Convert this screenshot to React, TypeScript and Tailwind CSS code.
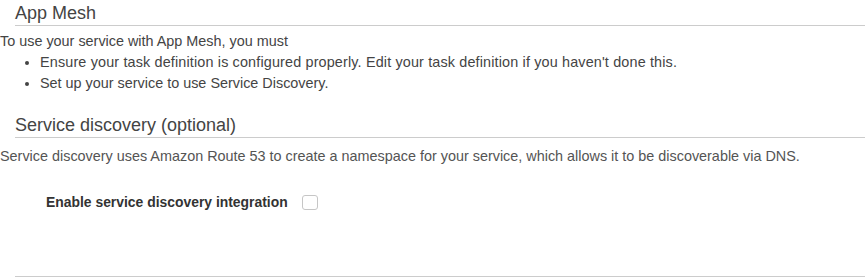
import React from "react";

export default function App() {
  return (
    <div className="w-[865px] h-[279px] bg-white overflow-hidden text-[#444] font-['Liberation_Sans',Arial,sans-serif]">
      <div className="ml-[15px] h-[26px] border-b border-[#cccccc] text-[18px] leading-[22px] pt-[2px] text-[#444]">
        App Mesh
      </div>
      <div className="mt-[5px] text-[14.4px] leading-[21px]">
        <div>To use your service with App Mesh, you must</div>
        <ul className="list-disc pl-[40px]">
          <li className="tracking-[0.15px]">Ensure your task definition is configured properly. Edit your task definition if you haven't done this.</li>
          <li>Set up your service to use Service Discovery.</li>
        </ul>
      </div>
      <div className="ml-[15px] mt-[18px] h-[26px] border-b border-[#cccccc] text-[18px] leading-[22px] pt-[2px] text-[#444]">
        Service discovery (optional)
      </div>
      <div className="mt-[8px] text-[14.4px] leading-[21px] text-[#545454]">
        Service discovery uses Amazon Route 53 to create a namespace for your service, which allows it to be discoverable via DNS.
      </div>
      <div className="mt-[25px] ml-[46px] flex items-center gap-[14px] h-[21px]">
        <span className="text-[13.9px] font-bold text-[#333]">Enable service discovery integration</span>
        <span className="w-[16px] h-[15px] rounded-[3px] border border-[#c6c6c6] bg-white" />
      </div>
      <div className="ml-[15px] mt-[63px] border-b border-[#cccccc]" />
    </div>
  );
}
